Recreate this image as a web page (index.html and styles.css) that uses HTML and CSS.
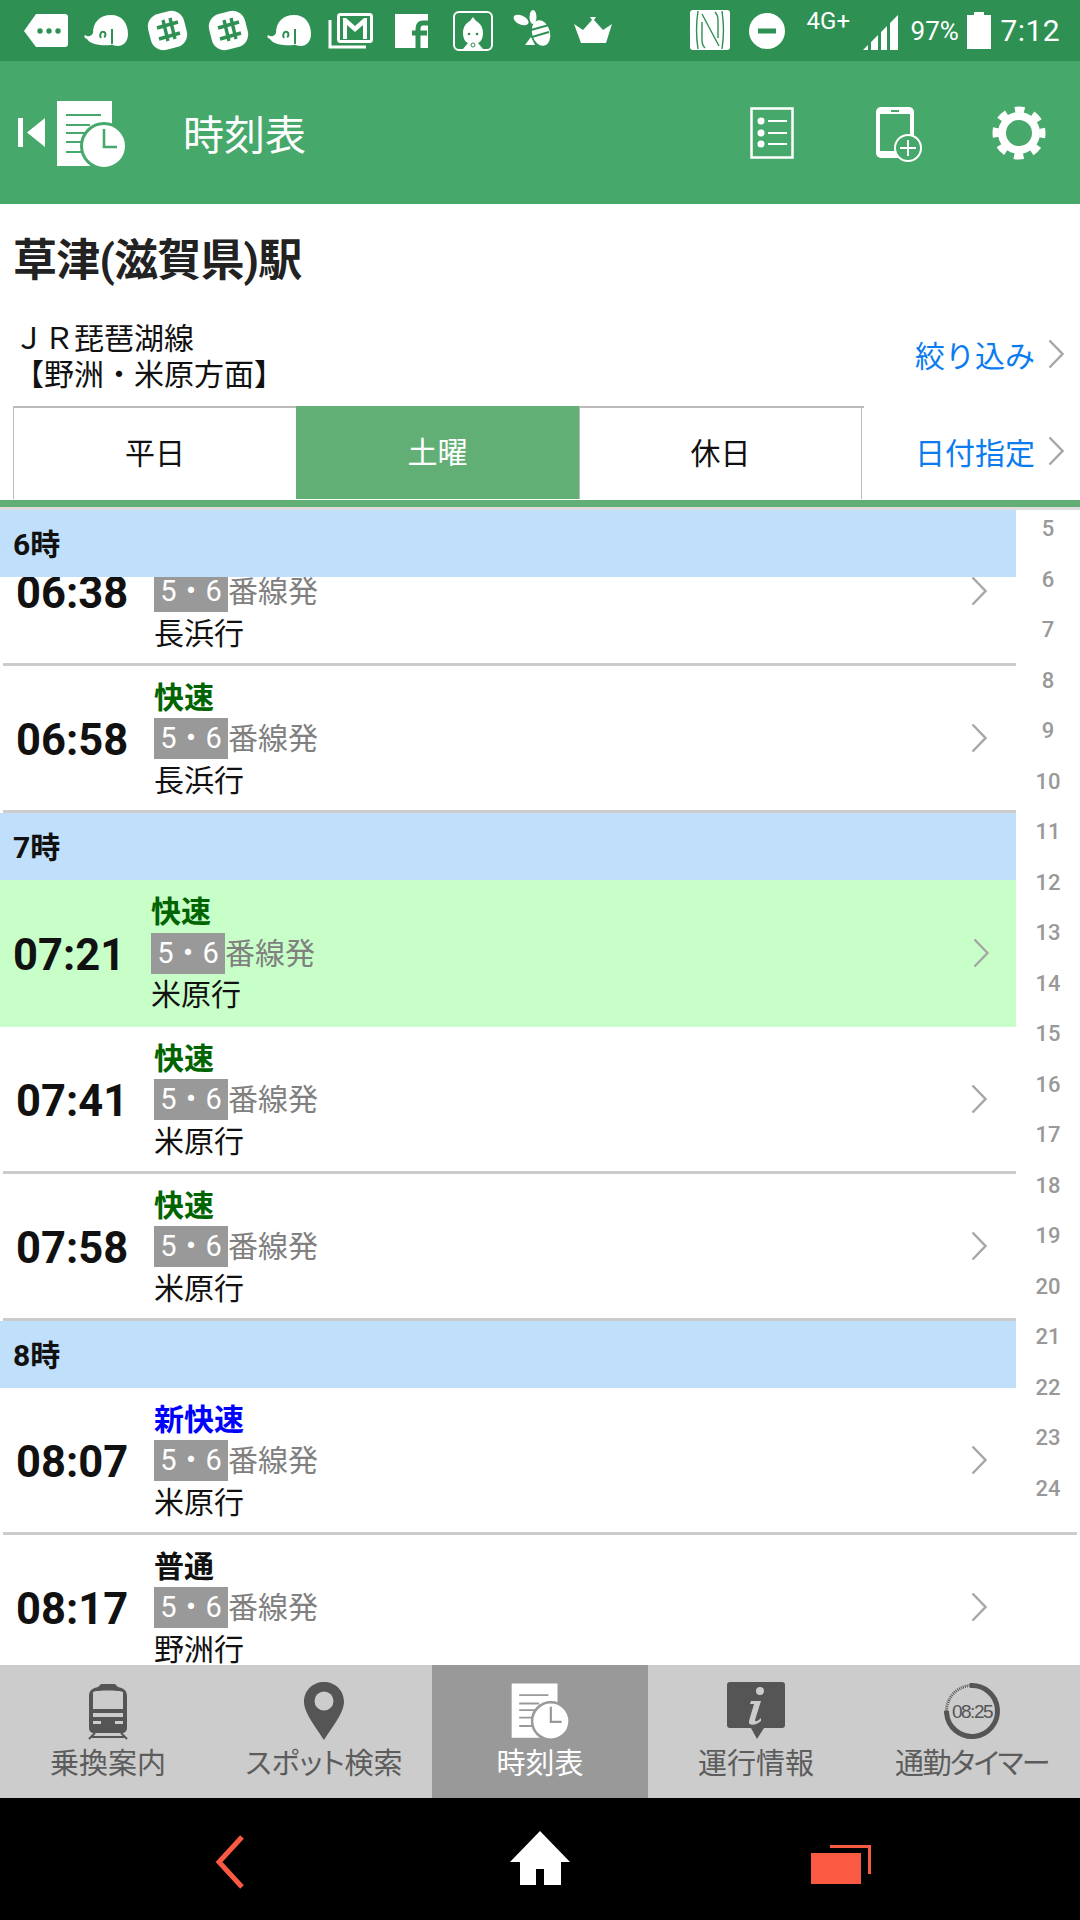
FILE: index.html
```html
<!DOCTYPE html>
<html lang="ja">
<head>
<meta charset="utf-8">
<title>時刻表</title>
<link rel="stylesheet" href="styles.css">
</head>
<body>
<div class="app">
  <svg class="defs" width="0" height="0" aria-hidden="true">
    <symbol id="chev" viewBox="0 0 16 30"><path d="M1.5 1.5 14.5 15 1.5 28.5" fill="none" stroke="#a6a6a6" stroke-width="2.4"/></symbol>
    <symbol id="elephant" viewBox="0 0 61 61">
      <path d="M11 39C8 38 8 36 9 35c3 2 6 2 8-2C17 22 24 15 35 15c11 0 17 8 17 19 0 8-5 12-10 12-4 0-6-2-7-1-7 1-21 0-24-6Z" fill="#fff"/>
      <path d="M25 38c-2-3 0-7 3-6 2 1 2 4 0 5M36 29v15" fill="none" stroke="#2e9053" stroke-width="2"/>
    </symbol>
    <symbol id="hash" viewBox="0 0 61 61">
      <rect x="12" y="12" width="37" height="37" rx="13" fill="#fff" transform="rotate(-14 30.5 30.5)"/>
      <path d="M26 20l5 21M33 18l5 21M20 28l21-6M22 39l21-6" fill="none" stroke="#2e9053" stroke-width="3.4"/>
    </symbol>
    <symbol id="doc" viewBox="0 0 72 68">
      <path d="M2 1H57V66H2Z" fill="currentColor"/>
      <path d="M11 15H46M11 25H35M11 33H30M11 42H27M11 52H27" fill="none" stroke="var(--ring)" stroke-width="2.2"/>
      <circle cx="49" cy="46" r="22.5" fill="currentColor" stroke="var(--ring)" stroke-width="3"/>
      <path d="M49 29V47H62" fill="none" stroke="var(--ring)" stroke-width="2.6"/>
    </symbol>
  </svg>

  <div class="status">
    <div class="status-left">
      <svg class="si" viewBox="0 0 61 61"><path d="M21 14H50a3 3 0 0 1 3 3V44a3 3 0 0 1-3 3H21L9 31Z" fill="#fff"/><circle cx="25" cy="31" r="2.7" fill="#2e9053"/><circle cx="34" cy="31" r="2.7" fill="#2e9053"/><circle cx="43" cy="31" r="2.7" fill="#2e9053"/></svg>
      <svg class="si"><use href="#elephant"/></svg>
      <svg class="si"><use href="#hash"/></svg>
      <svg class="si"><use href="#hash"/></svg>
      <svg class="si"><use href="#elephant"/></svg>
      <svg class="si" viewBox="0 0 61 61"><path d="M10 20v27h36" fill="none" stroke="#fff" stroke-width="3"/><rect x="18.500" y="14.500" width="33" height="27" rx="2" fill="none" stroke="#fff" stroke-width="3"/><path d="M23 39V18h3l9 8 9-8h3v21h-4V25l-8 7-8-7v14Z" fill="#fff"/></svg>
      <svg class="si" viewBox="0 0 61 61"><rect x="14" y="14" width="33" height="34" fill="#fff"/><path d="M37 48V29c0-4 2-6 5-6h5M31 33h15" fill="none" stroke="#2e9053" stroke-width="5"/></svg>
      <svg class="si" viewBox="0 0 61 61"><rect x="12" y="12" width="38" height="38" rx="5" fill="none" stroke="#fff" stroke-width="2"/><path d="M31 17l3 4c4 2 7 6 7 12 0 5-2 9-5 10l5 6H21l5-6c-3-1-5-5-5-10 0-6 3-10 7-12Z" fill="#fff"/><circle cx="27" cy="34" r="1.3" fill="#2e9053"/><circle cx="35" cy="34" r="1.300" fill="#2e9053"/><circle cx="31" cy="45" r="2" fill="none" stroke="#2e9053"/></svg>
      <svg class="si" viewBox="0 0 61 61"><ellipse cx="18" cy="20" rx="8" ry="4.500" fill="#fff" transform="rotate(25 18 20)"/><ellipse cx="30" cy="17" rx="3.500" ry="7" fill="#fff"/><ellipse cx="38" cy="33" rx="9" ry="13" fill="#fff" transform="rotate(-15 38 33)"/><path d="M28 37l-6 8h10Z" fill="#fff"/><path d="M28 30l18-5M29 37l17-5" stroke="#2e9053" stroke-width="2"/></svg>
      <svg class="si" viewBox="0 0 61 61"><path d="M10 24l9 6 9-10-2-3h6l-2 3 9 10 9-6-6 19H17Z" fill="#fff"/></svg>
    </div>
    <div class="status-right">
      <svg class="si-nfc" viewBox="0 0 40 40"><rect width="40" height="40" rx="3" fill="#fff"/><path d="M8 1C6 14 6 26 8 39M32 1C34 14 34 26 32 39M12 4 29 36M12 12V30C12 33 13 36 15 38M28 28V10C28 7 27 4 25 2" fill="none" stroke="#2e9053" stroke-width="1.400"/></svg>
      <svg class="si-dnd" viewBox="0 0 36 36"><circle cx="18" cy="18" r="18" fill="#fff"/><rect x="9" y="15.500" width="18" height="5" fill="#2e9053"/></svg>
      <span class="net">4G+</span>
      <svg class="si-signal" viewBox="0 0 36 36"><path d="M0 36 5 31V36ZM8 28 15 21V36H8ZM18 18 24 12V36H18ZM27 9 35 1V36H27Z" fill="#fff"/></svg>
      <span class="batt">97%</span>
      <svg class="si-battery" viewBox="0 0 24 37"><path d="M7 0H17V3H24V37H0V3H7Z" fill="#fff"/></svg>
      <span class="clock">7:12</span>
    </div>
  </div>

  <header class="bar">
    <svg class="bar-back" viewBox="0 0 28 30"><path d="M0 0H5V29H0ZM9 14.500 27 0V29Z" fill="#fff"/></svg>
    <svg class="bar-doc"><use href="#doc"/></svg>
    <h1 class="bar-title">時刻表</h1>
    <div class="bar-actions">
      <svg class="act-list" viewBox="0 0 44 52"><rect x="1.500" y="1.500" width="41" height="49" fill="none" stroke="#fff" stroke-width="2.500"/><circle cx="11" cy="14" r="3.500" fill="#fff"/><circle cx="11" cy="26" r="3.500" fill="#fff"/><circle cx="11" cy="37" r="3.500" fill="#fff"/><path d="M18 14H37M18 26H37M18 37H37" stroke="#fff" stroke-width="2.200"/></svg>
      <svg class="act-phone" viewBox="0 0 48 56"><rect x="0" y="0" width="38" height="51" rx="5" fill="#fff"/><rect x="4" y="7" width="30" height="37" fill="#47a86b"/><rect x="15" y="3" width="8" height="2" fill="#47a86b"/><circle cx="32" cy="41" r="13" fill="#47a86b" stroke="#fff" stroke-width="2"/><path d="M32 33V49M24 41H40" stroke="#fff" stroke-width="2"/></svg>
      <svg class="act-gear" viewBox="0 0 54 54"><circle cx="27" cy="27" r="17" fill="none" stroke="#fff" stroke-width="8"/><circle cx="27" cy="27" r="23.500" fill="none" stroke="#fff" stroke-width="6" stroke-dasharray="9.500 8.957" transform="rotate(-11.600 27 27)"/></svg>
    </div>
  </header>

  <main class="main">
    <h2 class="station">草津(滋賀県)駅</h2>
    <div class="line-row">
      <div class="line-name">ＪＲ琵琶湖線<br>【野洲・米原方面】</div>
      <a class="link">絞り込み<svg class="chev-link"><use href="#chev"/></svg></a>
    </div>
    <div class="tab-row">
      <div class="tabs">
        <div class="tab">平日</div>
        <div class="tab tab-on">土曜</div>
        <div class="tab">休日</div>
      </div>
      <a class="link">日付指定<svg class="chev-link"><use href="#chev"/></svg></a>
    </div>
    <div class="rule"></div>

    <section class="list">
      <div class="rows">
        <div class="row"><div class="time">06:38</div><div class="info"><div class="kind"></div><div class="plat"><span class="badge">5・6</span>番線発</div><div class="dest">長浜行</div></div><svg class="chev"><use href="#chev"/></svg></div>
        <div class="row"><div class="time">06:58</div><div class="info"><div class="kind k-rapid">快速</div><div class="plat"><span class="badge">5・6</span>番線発</div><div class="dest">長浜行</div></div><svg class="chev"><use href="#chev"/></svg></div>
        <div class="hour">7時</div>
        <div class="row row-now"><div class="time">07:21</div><div class="info"><div class="kind k-rapid">快速</div><div class="plat"><span class="badge">5・6</span>番線発</div><div class="dest">米原行</div></div><svg class="chev"><use href="#chev"/></svg></div>
        <div class="row"><div class="time">07:41</div><div class="info"><div class="kind k-rapid">快速</div><div class="plat"><span class="badge">5・6</span>番線発</div><div class="dest">米原行</div></div><svg class="chev"><use href="#chev"/></svg></div>
        <div class="row"><div class="time">07:58</div><div class="info"><div class="kind k-rapid">快速</div><div class="plat"><span class="badge">5・6</span>番線発</div><div class="dest">米原行</div></div><svg class="chev"><use href="#chev"/></svg></div>
        <div class="hour">8時</div>
        <div class="row"><div class="time">08:07</div><div class="info"><div class="kind k-new">新快速</div><div class="plat"><span class="badge">5・6</span>番線発</div><div class="dest">米原行</div></div><svg class="chev"><use href="#chev"/></svg></div>
        <div class="row"><div class="time">08:17</div><div class="info"><div class="kind k-local">普通</div><div class="plat"><span class="badge">5・6</span>番線発</div><div class="dest">野洲行</div></div><svg class="chev"><use href="#chev"/></svg></div>
      </div>
      <div class="hour hour-stuck">6時</div>
      <ol class="index">
        <li>5</li><li>6</li><li>7</li><li>8</li><li>9</li><li>10</li><li>11</li><li>12</li><li>13</li><li>14</li><li>15</li><li>16</li><li>17</li><li>18</li><li>19</li><li>20</li><li>21</li><li>22</li><li>23</li><li>24</li>
      </ol>
    </section>
  </main>

  <nav class="foot">
    <div class="foot-tab">
      <svg class="fi" viewBox="0 0 60 58"><path d="M23 2h14l3 3c5 1 9 3 9 9v32c0 3-2 5-5 5H16c-3 0-5-2-5-5V14c0-6 4-8 9-9Z" fill="#555"/><path d="M15 10c4-2 26-2 30 0V27H15ZM15 31H45V35H15ZM15 39h8v3h-8ZM37 39h8v3h-8Z" fill="#ccc"/><path d="M17 51 11 57M43 51 49 57M14 55H46" stroke="#555" stroke-width="2"/></svg>
      <span class="foot-label">乗換案内</span>
    </div>
    <div class="foot-tab">
      <svg class="fi" viewBox="0 0 60 58"><path d="M30 0c11 0 20 8 20 20 0 11-13 27-20 38C23 47 10 31 10 20 10 8 19 0 30 0Z" fill="#555"/><circle cx="30" cy="19" r="9.500" fill="#ccc"/></svg>
      <span class="foot-label">スポット検索</span>
    </div>
    <div class="foot-tab foot-on">
      <svg class="fi fi-doc"><use href="#doc"/></svg>
      <span class="foot-label">時刻表</span>
    </div>
    <div class="foot-tab">
      <svg class="fi" viewBox="0 0 60 58"><path d="M4 0H56a3 3 0 0 1 3 3V43a3 3 0 0 1-3 3H38L31 57 25 46H4a3 3 0 0 1-3-3V3a3 3 0 0 1 3-3Z" fill="#555"/><circle cx="34" cy="9" r="4" fill="#ccc"/><path d="M25 19H35L29 38c0 2 2 2 6-2v3c-4 4-13 6-12 0l5-17h-4Z" fill="#ccc"/></svg>
      <span class="foot-label">運行情報</span>
    </div>
    <div class="foot-tab">
      <svg class="fi" viewBox="0 0 60 58"><circle cx="30" cy="29" r="25.500" fill="none" stroke="#555" stroke-width="3" stroke-dasharray="1 1"/><circle class="timer-arc" cx="30" cy="29" r="25.500" fill="none" stroke="#555" stroke-width="5" stroke-dasharray="122 160"/><text x="30" y="35.500" text-anchor="middle" class="timer-text">08:25</text></svg>
      <span class="foot-label foot-label-tight">通勤タイマー</span>
    </div>
  </nav>

  <div class="sysnav">
    <svg class="sys" viewBox="0 0 80 60"><path d="M52 8 29 33 52 58" fill="none" stroke="#f95a41" stroke-width="5"/></svg>
    <svg class="sys" viewBox="0 0 80 60"><path d="M40 2 70 33H61V56H44V40H36V56H20V33H10Z" fill="#fff"/></svg>
    <svg class="sys" viewBox="0 0 80 60"><path d="M20 16H61V45H58V19H20Z" fill="#f95a41"/><rect x="1" y="24" width="50" height="31" fill="#f95a41"/></svg>
  </div>
</div>
</body>
</html>
```
FILE: styles.css
```css
* { box-sizing: border-box; }
html, body { margin: 0; padding: 0; }
body { font-family: Roboto, "Noto Sans CJK JP", sans-serif; color: #111; background: #fff; }
.app { width: 1080px; height: 1920px; display: flex; flex-direction: column; overflow: hidden; }
.defs { position: absolute; }

.status { height: 61px; background: #2e9053; display: flex; justify-content: space-between; color: #fff; flex: none; }
.status-left { display: flex; padding-left: 15px; }
.si { width: 61px; height: 61px; display: block; }
.status-right { display: flex; align-items: center; padding-right: 20px; position: relative; }
.si-nfc { width: 40px; height: 40px; margin-right: 19px; margin-top: -1px; }
.si-dnd { width: 36px; height: 36px; margin-right: 22px; }
.net { font-size: 24px; width: 56px; align-self: flex-start; line-height: 24px; margin-top: 9px; }
.si-signal { width: 36px; height: 36px; margin-right: 12px; margin-top: 2px; }
.batt { font-size: 26px; width: 56px; }
.si-battery { width: 24px; height: 37px; margin-right: 10px; }
.clock { font-size: 30px; letter-spacing: .4px; }

.bar { --ring: #47a86b; height: 143px; background: #47a86b; color: #fff; display: flex; align-items: center; flex: none; position: relative; }
.bar-back { width: 28px; height: 30px; margin-left: 18px; }
.bar-doc { width: 72px; height: 68px; margin-left: 9px; margin-top: 3px; }
.bar-title { margin: -2px 0 0 56px; font-size: 41px; font-weight: 400; }
.bar-actions { margin-left: auto; display: flex; align-items: center; padding-right: 34px; }
.act-list { width: 44px; height: 52px; }
.act-phone { width: 48px; height: 56px; margin-left: 82px; margin-top: 4px; }
.act-gear { width: 54px; height: 54px; margin-left: 68px; }

.main { flex: 1; display: flex; flex-direction: column; min-height: 0; }
.station { margin: 0; height: 116px; padding: 0 0 0 13px; font-size: 44px; font-weight: 700; line-height: 115px; letter-spacing: -.8px; color: #222; }
.line-row { height: 86px; display: flex; align-items: center; justify-content: space-between; padding: 0 16px 14px 14px; flex: none; }
.line-name { font-size: 30px; line-height: 36px; font-weight: 400; margin-top: 2px; }
.link { display: flex; align-items: center; font-size: 30px; color: #0a7cf0; margin-top: -4px; }
.chev-link { width: 16px; height: 30px; margin-left: 13px; }
.tab-row { height: 94px; display: flex; align-items: flex-start; justify-content: space-between; padding: 0 16px 0 13px; flex: none; }
.tabs { display: flex; height: 93px; border-top: 2px solid #bbb; width: 851px; }
.tab { width: 283px; font-size: 30px; display: flex; align-items: center; justify-content: center; border-left: 1px solid #bbb; padding-bottom: 6px; }
.tab:last-child { border-right: 1px solid #bbb; }
.tab-on { background: #62af76; color: #fff; border-left: 0; margin-top: -2px; }
.tab-row .link { margin-top: 23px; }
.rule { height: 10px; background: #62af76; border-bottom: 3px solid #ddd; flex: none; }

.list { flex: 1; position: relative; overflow: hidden; min-height: 0; }
.rows { padding-top: 9px; }
.hour { height: 67px; background: #bfdffb; font-size: 30px; font-weight: 700; line-height: 70px; padding-left: 13px; }
.hour-stuck { position: absolute; left: 0; top: 0; width: 1016px; }
.row { height: 147px; margin: 0 3px; display: flex; align-items: center; border-bottom: 3px solid #ccc; position: relative; }
.time { width: 151px; padding-left: 13px; font-size: 43.500px; font-weight: 700; padding-top: 4px; }
.info { display: flex; flex-direction: column; font-size: 30px; line-height: 41.500px; padding-top: 2px; }
.kind { font-weight: 700; height: 41.500px; }
.k-rapid { color: #006400; }
.k-new { color: #0000ff; }
.k-local { color: #111; }
.plat { color: #808080; display: flex; }
.badge { display: block; width: 74px; height: 41px; text-align: center; background: #999; color: #fff; font-size: 29px; }
.dest { color: #111; }
.chev { position: absolute; left: 968px; top: 57px; width: 16px; height: 30px; }
.row-now { margin: 0; background: #c8ffc8; border-bottom: 0; }
.row-now .info { padding-top: 0; }
.row-now .chev { left: 973px; top: 58px; }
.index { position: absolute; right: 0; top: 0; width: 64px; height: 1000px; margin: 0; padding: 1px 0 0; list-style: none; background: #fff; color: #999; font-size: 22px; font-weight: 500; text-align: center; }
.index li { height: 50.500px; line-height: 36px; }

.foot { --ring: #999; height: 133px; background: #ccc; display: flex; flex: none; position: relative; z-index: 1; }
.foot-tab { flex: 1; display: flex; flex-direction: column; align-items: center; padding-top: 17px; color: #5c5c5c; }
.fi { width: 60px; height: 58px; flex: none; }
.foot-label { font-size: 29px; line-height: 48px; font-feature-settings: "palt"; white-space: nowrap; }
.foot-label-tight { letter-spacing: -1.600px; }
.foot-on { background: #999; color: #fff; }
.timer-arc { transform: rotate(-95deg); transform-origin: 30px 29px; }
.timer-text { font-family: "Liberation Sans", sans-serif; font-size: 19px; letter-spacing: -1.500px; fill: #555; }

.sysnav { height: 122px; background: #000; display: grid; grid-template-columns: repeat(3, 310px); padding-left: 75px; justify-items: center; align-items: center; flex: none; }
.sys { width: 80px; height: 60px; display: block; }
```
